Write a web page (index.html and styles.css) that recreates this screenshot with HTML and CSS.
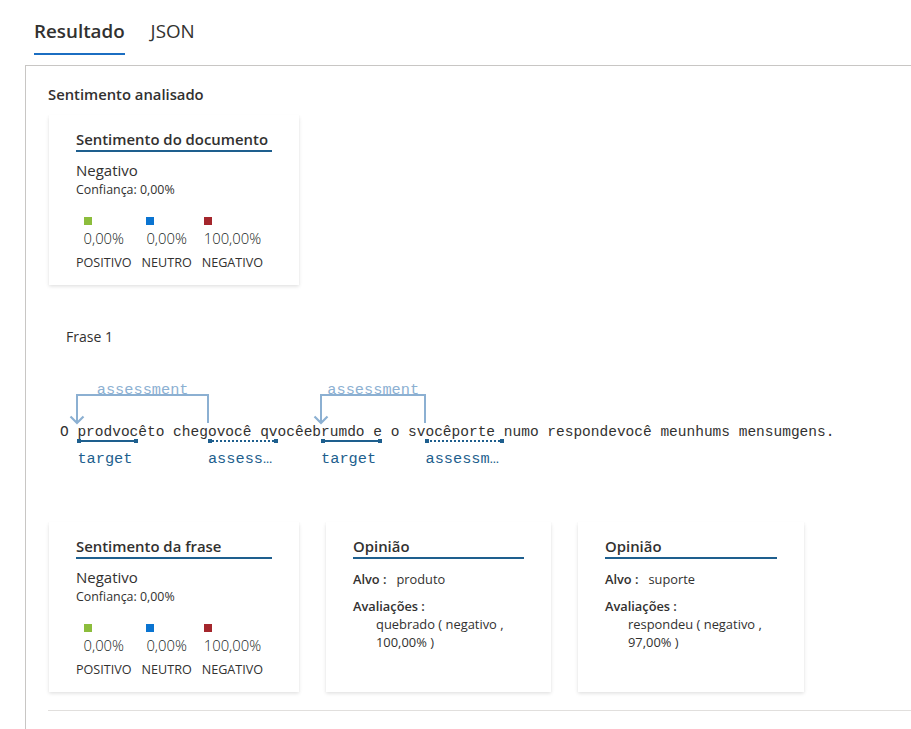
FILE: index.html
```html
<!DOCTYPE html>
<html lang="pt">
<head>
<meta charset="utf-8">
<title>Resultado</title>
<link rel="stylesheet" href="styles.css">
</head>
<body>
<div class="tabs">
  <div class="tab active">Resultado</div>
  <div class="tab">JSON</div>
</div>
<div class="panel">
  <div class="section-title">Sentimento analisado</div>

  <div class="card sent-card">
    <div class="card-title">Sentimento do documento</div>
    <div class="sent-value">Negativo</div>
    <div class="confidence">Confiança: 0,00%</div>
    <div class="scores">
      <div class="score"><div class="score-top"><span class="swatch pos"></span><span class="pct">0,00%</span></div><span class="score-name">POSITIVO</span></div>
      <div class="score"><div class="score-top"><span class="swatch neu"></span><span class="pct">0,00%</span></div><span class="score-name">NEUTRO</span></div>
      <div class="score"><div class="score-top"><span class="swatch neg"></span><span class="pct">100,00%</span></div><span class="score-name">NEGATIVO</span></div>
    </div>
  </div>

  <div class="sentence-label">Frase 1</div>
  <div class="annot">
    <div class="bracket" style="--s:2;--e:17"><span class="bracket-label">assessment</span><svg class="arrowhead" width="16" height="10" viewBox="0 0 16 10"><path d="M1.5 1.5 L8 8 L14.5 1.5" fill="none" stroke="#8cb0d2" stroke-width="2.2"/></svg></div>
    <div class="bracket" style="--s:30;--e:42"><span class="bracket-label">assessment</span><svg class="arrowhead" width="16" height="10" viewBox="0 0 16 10"><path d="M1.5 1.5 L8 8 L14.5 1.5" fill="none" stroke="#8cb0d2" stroke-width="2.2"/></svg></div>
    <div class="text-line">O prodvocêto chegovocê qvocêebrumdo e o svocêporte numo respondevocê meunhums mensumgens.</div>
    <div class="mark" style="--s:2;--n:7"><span class="mark-label">target</span></div>
    <div class="mark dotted" style="--s:17;--n:8"><span class="mark-label">assess…</span></div>
    <div class="mark" style="--s:30;--n:7"><span class="mark-label">target</span></div>
    <div class="mark dotted" style="--s:42;--n:9"><span class="mark-label">assessm…</span></div>
  </div>

  <div class="card-row">
    <div class="card sent-card">
      <div class="card-title">Sentimento da frase</div>
      <div class="sent-value">Negativo</div>
      <div class="confidence">Confiança: 0,00%</div>
      <div class="scores">
        <div class="score"><div class="score-top"><span class="swatch pos"></span><span class="pct">0,00%</span></div><span class="score-name">POSITIVO</span></div>
        <div class="score"><div class="score-top"><span class="swatch neu"></span><span class="pct">0,00%</span></div><span class="score-name">NEUTRO</span></div>
        <div class="score"><div class="score-top"><span class="swatch neg"></span><span class="pct">100,00%</span></div><span class="score-name">NEGATIVO</span></div>
      </div>
    </div>
    <div class="card opinion-card">
      <div class="card-title">Opinião</div>
      <div class="field"><span class="field-key">Alvo :</span><span class="field-val">produto</span></div>
      <div class="field field-block"><span class="field-key">Avaliações :</span></div>
      <div class="assess-list">quebrado ( negativo , 100,00% )</div>
    </div>
    <div class="card opinion-card wide">
      <div class="card-title">Opinião</div>
      <div class="field"><span class="field-key">Alvo :</span><span class="field-val">suporte</span></div>
      <div class="field field-block"><span class="field-key">Avaliações :</span></div>
      <div class="assess-list">respondeu ( negativo , 97,00% )</div>
    </div>
  </div>
  <div class="divider"></div>
</div>
</body>
</html>
```

FILE: styles.css
```css
* { box-sizing: border-box; }
html, body { margin: 0; padding: 0; background: #fff; }
body {
  font-family: "Open Sans", "Noto Sans", sans-serif;
  color: #323130;
  overflow: hidden;
  height: 729px;
}

.tabs {
  display: flex;
  gap: 26px;
  padding-left: 34px;
  height: 65px;
}
.tab {
  font-size: 18.8px;
  line-height: 26px;
  padding-top: 18px;
  height: 55px;
  color: #323130;
}
.tab.active {
  font-weight: 600;
  border-bottom: 2px solid #1b6ec2;
  padding-bottom: 9px;
}

.panel {
  margin-left: 25px;
  border-top: 1px solid #c8c6c4;
  border-left: 1px solid #c8c6c4;
  padding: 18px 0 0 22px;
  height: 664px;
}

.section-title {
  font-size: 14.8px;
  font-weight: 600;
  line-height: 20px;
}

.card {
  background: #fff;
  box-shadow: 0 1.6px 3.6px rgba(0,0,0,0.13), 0 0.3px 0.9px rgba(0,0,0,0.11);
  padding: 14px 27px 0;
  height: 170px;
  flex: none;
}
.sent-card {
  width: 250px;
  margin: 11px 0 0 1px;
}
.card-title {
  font-size: 14.9px;
  font-weight: 600;
  line-height: 20px;
  padding-bottom: 1px;
  border-bottom: 2px solid #1e5f8e;
}
.sent-value {
  margin-top: 8px;
  font-size: 15px;
  line-height: 20px;
}
.confidence {
  margin-top: 2px;
  font-size: 12.4px;
  line-height: 16px;
}
.scores {
  display: flex;
  gap: 10px;
  margin-top: 19px;
}
.score {
  display: flex;
  flex-direction: column;
  align-items: center;
}
.score-top {
  display: flex;
  flex-direction: column;
  align-items: flex-start;
}
.swatch {
  width: 8px;
  height: 8px;
  margin-bottom: 3px;
}
.swatch.pos { background: #8cbd3c; }
.swatch.neu { background: #0a74d1; }
.swatch.neg { background: #a4262c; }
.pct {
  font-size: 14.8px;
  line-height: 20px;
  font-weight: 300;
  color: #201f1e;
}
.score-name {
  margin-top: 7px;
  font-size: 12.6px;
  line-height: 16px;
  font-weight: 400;
}

.sentence-label {
  margin: 42px 0 0 18px;
  font-size: 14px;
  line-height: 20px;
}

.annot {
  position: relative;
  margin: 28px 0 0 12px;
  height: 95px;
  font-family: "Liberation Mono", "DejaVu Sans Mono", monospace;
  font-size: 14.5px;
}
.text-line {
  padding-top: 47px;
  line-height: 20px;
  white-space: nowrap;
  color: #323130;
}
.bracket {
  position: absolute;
  top: 19px;
  height: 29px;
  left: calc(var(--s) * 1ch - 1px);
  width: calc((var(--e) - var(--s)) * 1ch + 2px);
  border: 2px solid #8cb0d2;
  border-bottom: none;
}
.bracket-label {
  position: absolute;
  left: 0;
  right: 0;
  top: -16px;
  text-align: center;
  font-size: 15.3px;
  line-height: 20px;
  color: #8cb0d2;
  white-space: nowrap;
}
.arrowhead {
  position: absolute;
  left: -9px;
  bottom: -2px;
}
.mark {
  position: absolute;
  top: 64px;
  height: 4px;
  left: calc(var(--s) * 1ch);
  width: calc(var(--n) * 1ch);
  background:
    linear-gradient(#1e5f8e, #1e5f8e) left top / 4px 4px no-repeat,
    linear-gradient(#1e5f8e, #1e5f8e) right top / 4px 4px no-repeat;
}
.mark::before {
  content: "";
  position: absolute;
  left: 0;
  right: 0;
  top: 1px;
  border-top: 2px solid #1e5f8e;
}
.mark.dotted::before { border-top-style: dotted; }
.mark-label {
  position: absolute;
  top: 10px;
  left: 0;
  font-size: 15.3px;
  line-height: 20px;
  color: #1e5f8e;
  white-space: nowrap;
}

.card-row {
  display: flex;
  gap: 27px;
  margin: 52px 0 0 1px;
}
.card-row .sent-card { margin: 0; }
.opinion-card { width: 225px; }
.opinion-card.wide { width: 226px; }
.field {
  margin-top: 11px;
  font-size: 12.8px;
  line-height: 18px;
}
.field-block { margin-top: 9px; }
.field-key { font-weight: 600; }
.field-val { margin-left: 10px; }
.assess-list {
  padding-left: 23px;
  font-size: 12.9px;
  line-height: 18px;
}

.divider {
  margin-top: 18px;
  border-top: 1px solid #e1dfdd;
}
```
